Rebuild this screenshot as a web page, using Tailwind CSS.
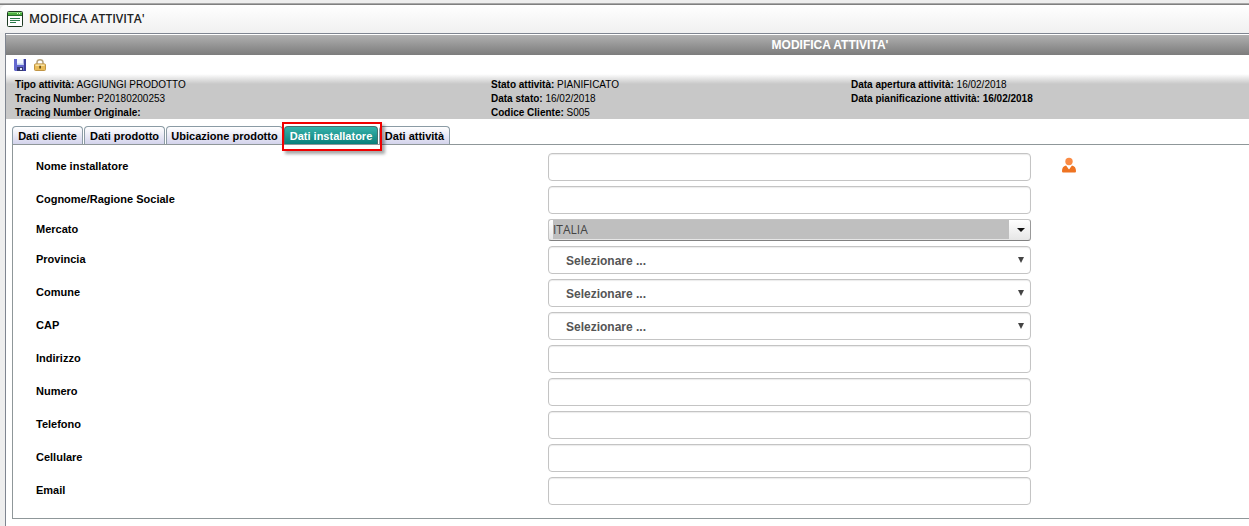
<!DOCTYPE html>
<html lang="it">
<head>
  <meta charset="UTF-8">
  <meta name="viewport" content="width=device-width, initial-scale=1.0">
  <title>Modifica attività</title>
  <script src="https://cdn.jsdelivr.net/npm/@tailwindcss/browser@4"></script>
</head>
<body class="bg-[#eeeeee] min-h-screen flex flex-col pt-[3px] overflow-x-hidden font-['Liberation_Sans',Arial,sans-serif] text-[11px] text-black">
  <div class="grow flex flex-col border-t border-[#a8a8a8]">
    <div class="grow flex flex-col border-t border-[#808080]">

      <!-- Intestazione finestra -->
      <header class="h-7 flex items-center gap-1.5 pl-[7px] rounded-tl-md bg-linear-to-b from-white to-[#f0f0f0]">
        <svg class="w-4 h-4" viewBox="0 0 16 16">
          <rect x="0.5" y="0.5" width="15" height="15" rx="1" fill="#fff" stroke="#1d3a22"/>
          <path d="M1 1h14v3H1z" fill="#4caf3f"/>
          <path d="M1 1h14v1H1z" fill="#86d67a"/>
          <path d="M10 2.500h1M12 2.500h1" stroke="#e6ffe0"/>
          <path d="M1 4.500h14" stroke="#256b2c"/>
          <path d="M3 7.500h10M3 9.500h10M3 11.500h6" stroke="#2c7a4a"/>
        </svg>
        <h1 class="font-['Open_Sans',sans-serif] text-xs font-semibold text-[#222]">MODIFICA ATTIVITA'</h1>
      </header>

      <main class="grow ml-[5px] border-t border-l border-[#7f8590] bg-white pt-px">
        <h2 class="h-5 pl-[405px] flex items-center justify-center bg-linear-to-b from-[#b0b0b0] to-[#7c7c7c] text-xs font-bold text-white">MODIFICA ATTIVITA'</h2>

        <!-- Barra strumenti -->
        <div class="h-[19px] pl-2 flex items-center gap-2">
          <button type="button" aria-label="Salva" class="w-3 h-3">
            <svg class="w-3 h-3" viewBox="0 0 12 12">
              <path d="M0 0h12v12H1L0 11z" fill="#6468cf"/>
              <path d="M10 0h2v12H3v-1h7z" fill="#3c3f9e"/>
              <path d="M3 0h6.500v6H3z" fill="#f2f7ff"/>
              <path d="M3 4.500h6.500V6H3z" fill="#c6d6f2"/>
              <path d="M3 8h6v4H3z" fill="#34386f"/>
              <path d="M6 9h2v2H6z" fill="#dfe6fa"/>
            </svg>
          </button>
          <button type="button" aria-label="Blocca" class="w-3 h-3">
            <svg class="w-3 h-3" viewBox="0 0 12 12">
              <path d="M3 5.500V3.500a3 2.700 0 0 1 6 0v2" fill="none" stroke="#b5a27c" stroke-width="1.500"/>
              <rect x="0.500" y="4.900" width="11" height="6.600" rx="1" fill="#ebbd58" stroke="#c09545"/>
              <path d="M1.500 5.500h9v1.500h-9z" fill="#f9e2a2"/>
              <path d="M5.300 6.800h1.600v2.600H5.300z" fill="#5c4718"/>
            </svg>
          </button>
        </div>

        <!-- Dati attività -->
        <section class="h-[45px] pt-1 pl-[9px] grid grid-cols-[476px_360px_1fr] bg-linear-to-b from-white via-[#c8c8c8] via-[10px] to-[#c8c8c8] text-[10px] leading-[14px]">
          <div>
            <p><b>Tipo attività:</b> AGGIUNGI PRODOTTO</p>
            <p><b>Tracing Number:</b> P20180200253</p>
            <p><b>Tracing Number Originale:</b></p>
          </div>
          <div>
            <p><b>Stato attività:</b> PIANIFICATO</p>
            <p><b>Data stato:</b> 16/02/2018</p>
            <p><b>Codice Cliente:</b> S005</p>
          </div>
          <div>
            <p><b>Data apertura attività:</b> 16/02/2018</p>
            <p><b>Data pianificazione attività: 16/02/2018</b></p>
          </div>
        </section>

        <!-- Schede -->
        <nav class="mt-[7px] ml-1.5 h-[18px] flex gap-px whitespace-nowrap font-bold">
          <button type="button" class="w-[71px] pt-px rounded-t border border-b-0 border-[#8b9ba5] bg-linear-to-b from-white to-[#d4d4ec]">Dati cliente</button>
          <button type="button" class="w-[81px] pt-px rounded-t border border-b-0 border-[#8b9ba5] bg-linear-to-b from-white to-[#d4d4ec]">Dati prodotto</button>
          <button type="button" class="w-[117px] pt-px rounded-t border border-b-0 border-[#8b9ba5] bg-linear-to-b from-white to-[#d4d4ec]">Ubicazione prodotto</button>
          <div class="relative w-[94px] flex">
            <button type="button" class="grow pt-px rounded-t border border-b-0 border-[#45706e] bg-linear-to-b from-[#35b3ab] to-[#087f7b] text-white">Dati installatore</button>
            <span class="absolute -top-1 -left-0.5 w-[100px] h-[29px] border-2 border-[#f00000] shadow-[3px_3px_3px_rgba(0,0,0,0.35)] pointer-events-none"></span>
          </div>
          <button type="button" class="w-[71px] pt-px rounded-t border border-b-0 border-[#8b9ba5] bg-linear-to-b from-white to-[#d4d4ec]">Dati attività</button>
        </nav>

        <form class="ml-1.5 mb-2 pt-2 pb-[13px] pl-[23px] flex flex-col gap-[5px] border-l border-y border-[#8f9799]">
          <div class="grid grid-cols-[512px_483px_1fr] items-center">
            <label for="nome" class="pb-0.5 font-bold">Nome installatore</label>
            <input id="nome" type="text" class="h-7 px-2 rounded border border-[#c4c4c4] shadow-[inset_0_1px_1px_rgba(0,0,0,0.08)]">
            <button type="button" aria-label="Seleziona installatore" class="ml-[30px] mb-1 w-4 h-4">
              <svg class="w-4 h-4" viewBox="0 0 16 16">
                <path d="M2.500 15.500C1.500 15.500 1 15 1 14c0-3 1.300-5 4-5.500L8 12l3-3.500c2.700.5 4 2.500 4 5.500 0 1-.5 1.500-1.500 1.500z" fill="#ee7322"/>
                <circle cx="8" cy="4.500" r="3.700" fill="#fa8b45"/>
                <path d="M5.500 8.500L8 12.500l2.500-4c-1.500.8-3.500.8-5 0z" fill="#fff"/>
              </svg>
            </button>
          </div>
          <div class="grid grid-cols-[512px_483px_1fr] items-center">
            <label for="cognome" class="pb-0.5 font-bold">Cognome/Ragione Sociale</label>
            <input id="cognome" type="text" class="h-7 px-2 rounded border border-[#c4c4c4] shadow-[inset_0_1px_1px_rgba(0,0,0,0.08)]">
          </div>
          <div class="grid grid-cols-[512px_483px_1fr] items-center">
            <label for="mercato" class="pb-0.5 font-bold">Mercato</label>
            <div class="relative h-[22px] pl-1 pr-[21px] pb-px flex rounded-[3px] border border-[#c4c4c4] border-b-[#808080] border-r-[#999] bg-linear-to-b from-white to-[#e6e6e6]">
              <select id="mercato" class="grow appearance-none bg-[#bfbfbf] font-['Open_Sans',sans-serif] text-xs leading-5 text-[#444]">
                <option>ITALIA</option>
              </select>
              <svg class="absolute right-[5px] top-2 w-2 h-1 pointer-events-none" viewBox="0 0 8 4"><path d="M0 0h8L4 4z" fill="#111"/></svg>
            </div>
          </div>
          <div class="grid grid-cols-[512px_483px_1fr] items-center">
            <label for="provincia" class="pb-0.5 font-bold">Provincia</label>
            <div class="relative flex">
              <select id="provincia" class="grow h-7 pt-px pl-[17px] appearance-none rounded border border-[#c4c4c4] shadow-[inset_0_1px_1px_rgba(0,0,0,0.08)] text-xs font-bold text-[#555]">
                <option>Selezionare ...</option>
              </select>
              <svg class="absolute right-[7px] top-[11px] w-1.5 h-1.5 pointer-events-none" viewBox="0 0 6 6"><path d="M0 0h6L3 6z" fill="#444"/></svg>
            </div>
          </div>
          <div class="grid grid-cols-[512px_483px_1fr] items-center">
            <label for="comune" class="pb-0.5 font-bold">Comune</label>
            <div class="relative flex">
              <select id="comune" class="grow h-7 pt-px pl-[17px] appearance-none rounded border border-[#c4c4c4] shadow-[inset_0_1px_1px_rgba(0,0,0,0.08)] text-xs font-bold text-[#555]">
                <option>Selezionare ...</option>
              </select>
              <svg class="absolute right-[7px] top-[11px] w-1.5 h-1.5 pointer-events-none" viewBox="0 0 6 6"><path d="M0 0h6L3 6z" fill="#444"/></svg>
            </div>
          </div>
          <div class="grid grid-cols-[512px_483px_1fr] items-center">
            <label for="cap" class="pb-0.5 font-bold">CAP</label>
            <div class="relative flex">
              <select id="cap" class="grow h-7 pt-px pl-[17px] appearance-none rounded border border-[#c4c4c4] shadow-[inset_0_1px_1px_rgba(0,0,0,0.08)] text-xs font-bold text-[#555]">
                <option>Selezionare ...</option>
              </select>
              <svg class="absolute right-[7px] top-[11px] w-1.5 h-1.5 pointer-events-none" viewBox="0 0 6 6"><path d="M0 0h6L3 6z" fill="#444"/></svg>
            </div>
          </div>
          <div class="grid grid-cols-[512px_483px_1fr] items-center">
            <label for="indirizzo" class="pb-0.5 font-bold">Indirizzo</label>
            <input id="indirizzo" type="text" class="h-7 px-2 rounded border border-[#c4c4c4] shadow-[inset_0_1px_1px_rgba(0,0,0,0.08)]">
          </div>
          <div class="grid grid-cols-[512px_483px_1fr] items-center">
            <label for="numero" class="pb-0.5 font-bold">Numero</label>
            <input id="numero" type="text" class="h-7 px-2 rounded border border-[#c4c4c4] shadow-[inset_0_1px_1px_rgba(0,0,0,0.08)]">
          </div>
          <div class="grid grid-cols-[512px_483px_1fr] items-center">
            <label for="telefono" class="pb-0.5 font-bold">Telefono</label>
            <input id="telefono" type="tel" class="h-7 px-2 rounded border border-[#c4c4c4] shadow-[inset_0_1px_1px_rgba(0,0,0,0.08)]">
          </div>
          <div class="grid grid-cols-[512px_483px_1fr] items-center">
            <label for="cellulare" class="pb-0.5 font-bold">Cellulare</label>
            <input id="cellulare" type="tel" class="h-7 px-2 rounded border border-[#c4c4c4] shadow-[inset_0_1px_1px_rgba(0,0,0,0.08)]">
          </div>
          <div class="grid grid-cols-[512px_483px_1fr] items-center">
            <label for="email" class="pb-0.5 font-bold">Email</label>
            <input id="email" type="email" class="h-7 px-2 rounded border border-[#c4c4c4] shadow-[inset_0_1px_1px_rgba(0,0,0,0.08)]">
          </div>
        </form>
      </main>
    </div>
  </div>
</body>
</html>
